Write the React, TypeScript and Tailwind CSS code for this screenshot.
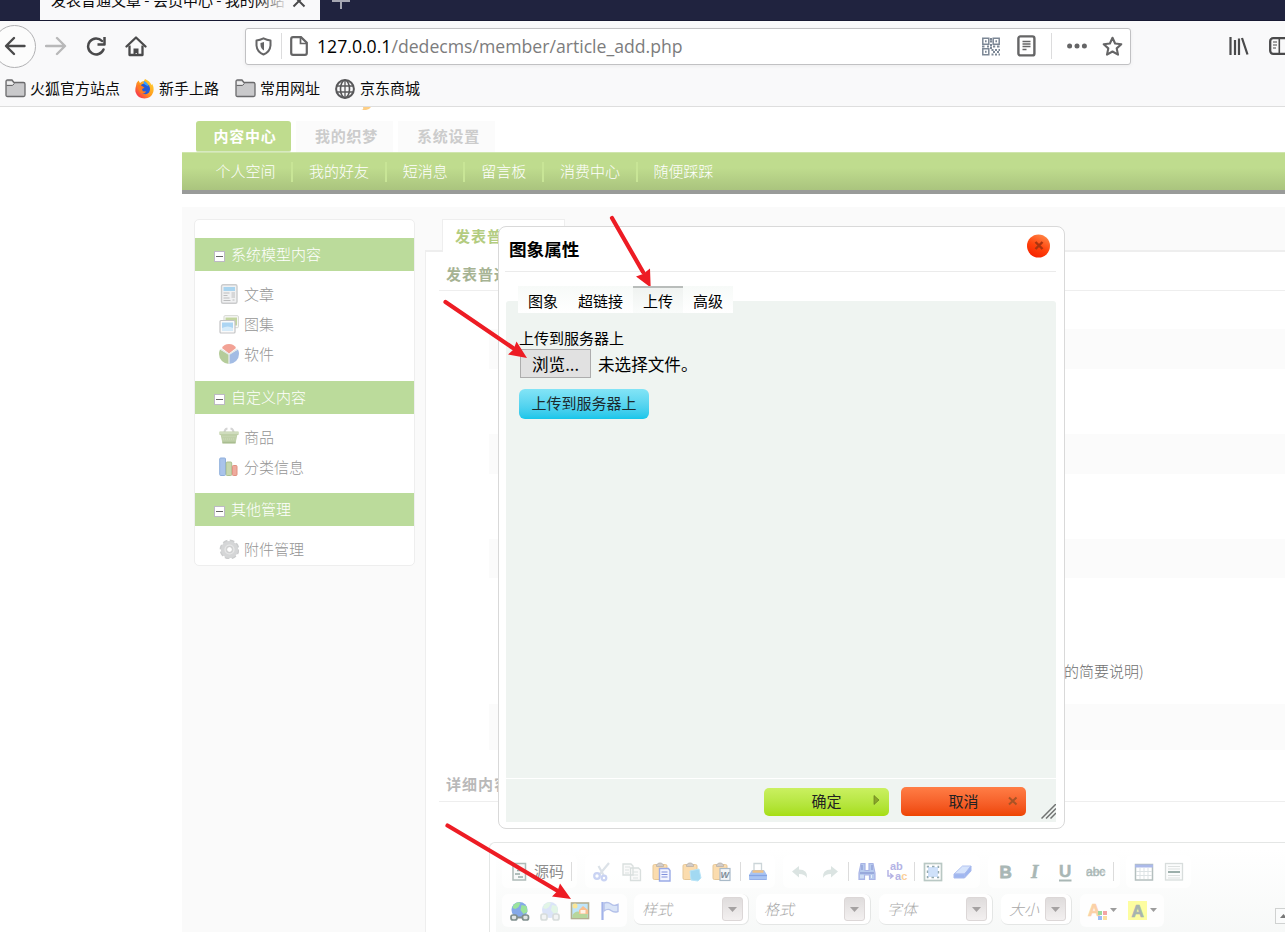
import React from "react";

const SidebarHeader = ({ title }: { title: string }) => (
  <div className="flex h-[33px] items-center bg-[#bbdb9b] pl-[19px] text-[15px] text-white">
    <span className="mt-[4px] mr-[6px] flex h-[11px] w-[11px] shrink-0 items-center justify-center border border-[#bdb9c4] bg-white">
      <span className="h-px w-[7px] bg-[#666]" />
    </span>
    <span className="-mt-[2px] leading-[15px] font-light">{title}</span>
  </div>
);

const SidebarItem = ({ title, children }: { title: string; children: React.ReactNode }) => (
  <div className="flex h-[30px] items-center gap-[5px] pl-[24px] text-[15px] leading-[15px] text-[#959595]">
    <svg width="20" height="20" viewBox="0 0 20 20">
      {children}
    </svg>
    <span className="-mt-[2px] font-light">{title}</span>
  </div>
);

const Folder = () => (
  <svg width="21" height="19" viewBox="0 0 21 19">
    <path d="M1 16V2.500Q1 1 2.500 1H7l2 2.500h9.500Q20 3.500 20 5v11q0 1.500-1.500 1.500h-16Q1 17.500 1 16z" fill="#c9c9cb" stroke="#6a6a6c" strokeWidth="1.300" />
    <path d="M1.500 6.500h6l2-2" fill="none" stroke="#6a6a6c" />
    <path d="M2 5.500V2.500h4.500l2 2-1.500 1z" fill="#eee" />
  </svg>
);

const Cell = ({ children }: { children: React.ReactNode }) => (
  <div className="flex w-[30px] shrink-0 items-center justify-center">
    <svg width="20" height="20" viewBox="0 0 20 20" className="overflow-visible">
      {children}
    </svg>
  </div>
);

const Sep = () => <div className="my-[7px] w-px shrink-0 bg-[#dcdcdc]" />;

const Group = ({ className, children }: { className: string; children: React.ReactNode }) => (
  <div className={"flex h-[33px] shrink-0 rounded-[6px] bg-white/80 " + className}>{children}</div>
);

const Select = ({ label, className }: { label: string; className: string }) => (
  <div className={"flex h-[31px] shrink-0 items-center justify-between rounded-[7px] border-r border-b border-[#e4e6e5] bg-white pr-[5px] pl-[8px] " + className}>
    <span className="-mt-px text-[15px] leading-[15px] font-light text-[#a9a9a9] italic">{label}</span>
    <span className="flex h-[24px] w-[21px] items-center justify-center rounded-[3px] border border-[#dcd7d7] bg-linear-to-b from-[#dfdcdc] to-[#f3f0f0]">
      <svg width="9" height="5" viewBox="0 0 9 5"><path d="M0 0h9L4.500 5z" fill="#a5a2a2" /></svg>
    </span>
  </div>
);

const Clip = () => (
  <>
    <rect x="1" y="2.500" width="14" height="15" rx="1.500" fill="#fbdcae" stroke="#e6c797" />
    <path d="M4.500 4.500V3l2-2h3l2 2v1.500z" fill="#d0ccca" stroke="#b5aca5" strokeWidth=".7" />
  </>
);

const NavItem = ({ children }: { children: React.ReactNode }) => (
  <div className="mr-[16px] flex h-[20px] items-center border-r-2 border-[#c8e596] pr-[15.600px] text-[15px] leading-[18px] font-light text-white last:border-0">
    <span className="-mt-[3px]">{children}</span>
  </div>
);

const Band = ({ className }: { className: string }) => <div className={"ml-[63px] bg-[#fbfbfb] " + className} />;

const BrowserChrome = () => (
  <header className="h-[107px] shrink-0 border-b border-[#dedede] bg-[#f9f9fa]">
    <div className="flex h-[21px] overflow-hidden border-b border-[#171932] bg-[#20233f]">
      <div className="ml-[40px] flex h-[22px] w-[280px] bg-[#f9f9fa] pl-[11px]">
        <div className="relative -mt-[9px] h-[22px] w-[238px] shrink-0 overflow-hidden text-[15px] leading-[18px] whitespace-nowrap text-[#0c0c0d]">
          发表普通文章 - 会员中心 - 我的网站
          <span className="absolute top-0 right-0 h-full w-[34px] bg-linear-to-r from-transparent to-[#f9f9fa]" />
        </div>
        <svg className="-mt-[6px] ml-[3px] shrink-0" width="14" height="14" viewBox="0 0 14 14"><path d="M1.500 1.500l11 11M12.500 1.500l-11 11" stroke="#4a4a4b" strokeWidth="2" /></svg>
      </div>
      <svg className="-mt-[8px] ml-[12px]" width="18" height="18" viewBox="0 0 18 18"><path d="M9 0v17M0 9h18" stroke="#a6a7b2" strokeWidth="2" /></svg>
    </div>

    <div className="flex h-[50px] items-center">
      <div className="-ml-[7px] flex h-[43px] w-[43px] shrink-0 items-center justify-center rounded-full border border-[#b1b1b3] bg-[#fcfcfc]">
        <svg width="22" height="20" viewBox="0 0 22 20"><path d="M20.500 10H2.500M10 2l-8 8 8 8" fill="none" stroke="#4a4a4b" strokeWidth="2.400" strokeLinecap="round" strokeLinejoin="round" /></svg>
      </div>
      <svg className="ml-[9px] shrink-0" width="22" height="20" viewBox="0 0 22 20"><path d="M1 10h18.500M12 2l8 8-8 8" fill="none" stroke="#b8b8b9" strokeWidth="2.400" strokeLinecap="round" strokeLinejoin="round" /></svg>
      <svg className="ml-[18px] shrink-0" width="22" height="20" viewBox="0 0 22 20">
        <path d="M18.500 13.500A8 8 0 1 1 17 5" fill="none" stroke="#4a4a4b" strokeWidth="2.500" strokeLinecap="round" />
        <path d="M19.500 1v7.500h-7" fill="none" stroke="#4a4a4b" strokeWidth="2.500" strokeLinejoin="round" />
      </svg>
      <svg className="ml-[18px] shrink-0" width="22" height="21" viewBox="0 0 22 21">
        <path d="M1.500 10.500L11 1.500l9.500 9" fill="none" stroke="#4a4a4b" strokeWidth="2.300" strokeLinecap="round" strokeLinejoin="round" />
        <path d="M4.500 9.500V19h13V9.500" fill="none" stroke="#4a4a4b" strokeWidth="2.300" strokeLinejoin="round" />
        <path d="M8.500 19v-6.500h5V19h-1.500v-2h-1.500v2z" fill="#4a4a4b" />
      </svg>

      <div className="ml-[98px] flex h-[37px] w-[886px] shrink-0 items-center rounded-[3px] border border-[#c1c1c3] bg-white shadow-[0_1px_4px_rgba(0,0,0,0.06)]">
        <svg className="ml-[9px] shrink-0" width="17" height="19" viewBox="0 0 17 19">
          <path d="M1.500 3.500Q5 3 8.500 1.300 12 3 15.500 3.500v5Q15 15 8.500 17.500 2 15 1.500 8.500z" fill="none" stroke="#656566" strokeWidth="2" strokeLinejoin="round" />
          <path d="M9 5v8.500Q5.700 11.500 5.500 8V6z" fill="#656566" />
        </svg>
        <span className="ml-[9px] h-[26px] w-px bg-[#dcdcdd]" />
        <svg className="ml-[8px] shrink-0" width="18" height="20" viewBox="0 0 18 20">
          <path d="M1.200 3q0-1.800 1.800-1.800h8l5.800 5.600V17q0 1.800-1.800 1.800H3q-1.800 0-1.800-1.800z" fill="none" stroke="#656566" strokeWidth="2.200" />
          <path d="M10.500 1.500v6h6" fill="none" stroke="#656566" strokeWidth="1.700" />
        </svg>
        <span className="ml-[9px] w-[654px] shrink-0 font-['Open_Sans','Noto_Sans',sans-serif] text-[17.650px] leading-[24px] whitespace-nowrap text-[#7c7c7d]">
          <span className="text-black">127.0.0.1</span>/dedecms/member/article_add.php
        </span>
        <svg className="ml-[11px] shrink-0" width="18" height="19" viewBox="0 0 18 19" fill="none" stroke="#7c8795" strokeWidth="1.500">
          <path d="M.8 1.300h6v6h-6zM11.200 1.300h6v6h-6zM.8 11.700h6v6h-6z" />
          <path d="M3 4.300h1.600M13.400 4.300H15M3 14.700h1.600M9 1v4M8 4.500h2.500M0 9.500h3M5 9.500h2M9 7v5M11 9.500h2.500M15 9.500h3M9.500 13h2M13 13h2M16.500 13H18M11 15h2M15 15h2M9.500 17.500h2M13 17.500h2M16.500 17.500H18" strokeDasharray="2.200 .5" strokeWidth="2" />
        </svg>
        <svg className="ml-[17px] shrink-0" width="19" height="22" viewBox="0 0 19 22">
          <rect x="1.400" y="1.400" width="16" height="19" rx="2" fill="none" stroke="#656566" strokeWidth="2.400" />
          <path d="M5.500 6.500h8M5.500 9h8M5.500 11.500h8M5.500 14.500h4" stroke="#656566" strokeWidth="1.300" />
        </svg>
        <span className="ml-[15px] h-[26px] w-px shrink-0 bg-[#dcdcdd]" />
        <svg className="ml-[15px] shrink-0" width="20" height="6" viewBox="0 0 20 6" fill="#656566"><circle cx="2.600" cy="3" r="2.500" /><circle cx="10" cy="3" r="2.500" /><circle cx="17.400" cy="3" r="2.500" /></svg>
        <svg className="ml-[15px] shrink-0" width="21" height="21" viewBox="0 0 21 21"><path d="M10.500 1.800l2.600 5.700 6.200.7-4.600 4.200 1.300 6.200-5.500-3.100L5 18.600l1.300-6.200L1.700 8.200l6.200-.7z" fill="none" stroke="#656566" strokeWidth="2.100" strokeLinejoin="round" /></svg>
      </div>

      <svg className="ml-[98px] shrink-0" width="20" height="18" viewBox="0 0 20 18"><path d="M1.500 0v18M6 3v15M10 1.500v16.500M13 1l5.500 16.500" stroke="#4a4a4b" strokeWidth="2.200" /></svg>
      <svg className="ml-[20px] shrink-0" width="22" height="18" viewBox="0 0 22 18">
        <rect x="1.200" y="1.200" width="20" height="15.600" rx="3" fill="none" stroke="#4a4a4b" strokeWidth="2.300" />
        <path d="M10.300 1v16" stroke="#4a4a4b" strokeWidth="1.600" /><path d="M4 5h4M4 8h4M4 11h3" stroke="#4a4a4b" strokeWidth="1.200" />
      </svg>
    </div>

    <div className="flex h-[35px] items-center pl-[5px] text-[15px] text-[#0c0c0d]">
      <div className="flex w-[130px] items-center gap-[4px]"><Folder />火狐官方站点</div>
      <div className="flex w-[100px] items-center gap-[5px]">
        <svg width="19" height="20" viewBox="0 0 19 20">
          <defs><linearGradient id="fox" x1="1" y1="0" x2="0" y2="1"><stop offset="0" stopColor="#ffe13a" /><stop offset=".5" stopColor="#ff9a1c" /><stop offset="1" stopColor="#f5165a" /></linearGradient></defs>
          <path d="M1 7Q1.500 3 3.500 1.500L5 4Q7 2 9 2L10 0q5 2 6.500 6l.8-1q2 4 1 8-2 6.500-8.800 6.500T.5 13Q0 10 1 7z" fill="url(#fox)" />
          <path d="M6.500 5.500q4-2.500 7.500 1 2 3.500 0 7-3 3-7 .5-2-2-2-4.500z" fill="#245bd8" />
          <path d="M9 2q-1 2.500 1.500 4l3 1.500Q13 3.500 9 2z" fill="#3aa0ff" />
          <path d="M3.500 5.500l4 1.700 2 1.500-2.500 1.300.8 2.300 3.500.2q-2 3-5.500 1.500-3.500-3-2.300-8.500z" fill="#ff7a20" />
        </svg>
        新手上路
      </div>
      <div className="flex w-[100px] items-center gap-[4px]"><Folder />常用网址</div>
      <div className="flex items-center gap-[5px]">
        <svg width="20" height="20" viewBox="0 0 20 20" fill="none" stroke="#58585a" strokeWidth="1.600"><circle cx="10" cy="10" r="8.900" strokeWidth="2" /><ellipse cx="10" cy="10" rx="4.500" ry="8.800" /><path d="M10 1v18M1.500 7h17M1.500 13h17" strokeWidth="1.300" /></svg>
        京东商城
      </div>
    </div>
  </header>
);

const Sidebar = () => (
  <aside className="mt-[12px] ml-[12px] h-[347px] w-[221px] shrink-0 overflow-hidden rounded-[5px] border border-[#eeeeee] bg-white pt-[18px]">
    <SidebarHeader title="系统模型内容" />
    <div className="pt-[8px] pb-[12px]">
      <SidebarItem title="文章">
        <rect x="2.500" y=".7" width="15.500" height="18.600" rx="1.500" fill="#f0f1f2" stroke="#cbcccd" strokeWidth="1.400" />
        <rect x="4.500" y="3" width="11.500" height="4" fill="#a9d4ef" />
        <path d="M4.500 9h6M4.500 11.500h4M4.500 14h6M4.500 16.500h7M12.500 9H16M12.500 11H16M12.500 13H16M13.500 16h2" stroke="#bcbdbe" />
      </SidebarItem>
      <SidebarItem title="图集">
        <rect x="5" y="1.700" width="14.400" height="12" rx="1" fill="#fafafa" stroke="#d3d5cf" /><rect x="6.500" y="3.500" width="11.500" height="8" fill="#c3d5a0" />
        <rect x="1" y="6.500" width="15" height="12.500" rx="1" fill="#fafafa" stroke="#c3c4c5" strokeWidth="1.200" /><rect x="3" y="8.500" width="11" height="8" fill="#acd5f3" /><path d="M3 14q6-3 11 0v2.500H3z" fill="#d7ecfa" />
      </SidebarItem>
      <SidebarItem title="软件">
        <path d="M10 10.500L1 5.500Q0 7.500 0 10A10 10 0 0 0 10 20z" fill="#b5cc9a" /><path d="M10 10.500l9-5Q20 7.500 20 10A10 10 0 0 1 10 20z" fill="#a3bce4" /><path d="M10 9.500L3 4Q5 0 10 0t7 4z" fill="#f2a295" />
        <path d="M10 20v-9.500L1.500 5M10 10.500L18.500 5" fill="none" stroke="#e3e9e6" strokeWidth="1.400" />
      </SidebarItem>
    </div>
    <SidebarHeader title="自定义内容" />
    <div className="pt-[8px] pb-[11px]">
      <SidebarItem title="商品">
        <path d="M5.500 6q0-4 3-4.500M14.500 6q0-4-3-4.500" fill="none" stroke="#d4d4d4" strokeWidth="2.200" /><path d="M.5 4.500h19v3.500h-1.200L16.500 16.500h-13L1.700 8H.5z" fill="#bfd0a8" /><path d="M.5 6h19" stroke="#cfdcbd" strokeWidth="2" /><path d="M3.500 15.500h13" stroke="#a9bd90" strokeWidth="1.600" /><path d="M3.500 9.500h13M4 12h12" stroke="#cbd9b8" strokeDasharray="1 1" />
      </SidebarItem>
      <SidebarItem title="分类信息">
        <rect x=".7" y="1" width="5.800" height="17.500" rx="1" fill="#a9c3ea" stroke="#8fafdc" /><rect x="7.200" y="5" width="5.500" height="13.500" rx="1" fill="#c6d7ad" stroke="#acc18f" /><rect x="13.400" y="8.500" width="4.600" height="10" rx="1" fill="#efaa9c" stroke="#df9180" />
      </SidebarItem>
    </div>
    <SidebarHeader title="其他管理" />
    <div className="pt-[8px]">
      <SidebarItem title="附件管理">
        <circle cx="10.500" cy="10.500" r="8.600" fill="#d2d3d4" stroke="#cbcccd" strokeWidth="2.600" strokeDasharray="4.500 2.250" /><circle cx="10.500" cy="10.500" r="8.600" fill="#d5d6d7" /><circle cx="10.500" cy="10.500" r="4.500" fill="none" stroke="#e8e8e8" strokeWidth="1.200" /><circle cx="10.500" cy="10.500" r="2.800" fill="#fff" stroke="#bbb" strokeWidth=".6" />
      </SidebarItem>
    </div>
  </aside>
);

const Editor = () => (
  <div className="ml-[63px] h-[110px] rounded-tl-[6px] border-t border-l border-[#e4e6e5] bg-white pt-[6px] pl-[6px]">
    <div className="h-[104px] bg-linear-to-b from-white to-[#f5f7f6] pt-[6px] pl-[6px]">
      <div className="flex h-[33px]">
        <Group className="w-[75px]">
          <div className="ml-[7px] flex w-[21px] items-center"><svg width="20" height="20" viewBox="0 0 20 20"><rect x="4" y="1.500" width="12.500" height="16.500" fill="#f7f9f9" stroke="#aebbb8" strokeWidth="1.500" /><path d="M6 5h5M8 8.500h6M6 12h5M9 15h5" stroke="#98aaa6" strokeWidth="1.400" /></svg></div>
          <span className="-mt-[2px] mr-[7px] ml-[4px] self-center text-[15px] leading-[15px] whitespace-nowrap text-[#8d8d8d]">源码</span>
          <Sep />
        </Group>
        <Group className="ml-[8px] w-[190px] pl-[2px]">
          <Cell><path d="M17 1L7 13M6.500 4l5 9" stroke="#dce2e8" strokeWidth="2.200" /><circle cx="5" cy="14" r="2.800" fill="none" stroke="#c9d3f3" strokeWidth="2.200" /><circle cx="12" cy="16" r="2.300" fill="none" stroke="#c9d3f3" strokeWidth="2.200" /></Cell>
          <Cell><path d="M1 2h8l2 2v9H1zM8.500 6h8l2 2v10.500h-10z" fill="#fafafa" stroke="#d9dfde" strokeWidth="1.300" /><path d="M3 5h5M3 8h4M3 11h4M11 10h5M11 13h5M11 16h5" stroke="#dce2e1" /></Cell>
          <Cell><Clip /><path d="M7.500 6.500h9l1.500 2V19H7.500z" fill="#f3f5ff" stroke="#9aabe6" strokeWidth="1.400" /><path d="M9.500 10h6M9.500 12.500h6M9.500 15h6" stroke="#8191dc" /></Cell>
          <Cell><Clip /><path d="M8 9l9-2 2 9-3 3-7-1z" fill="#a2d9f2" stroke="#b9e4f7" /></Cell>
          <Cell><Clip /><rect x="8" y="6.500" width="10" height="12" fill="#f3f6f8" stroke="#a9bac8" strokeWidth="1.200" /><text x="8.500" y="16" fontSize="9" fontWeight="bold" fontStyle="italic" fill="#7e8d99" fontFamily="Liberation Sans">W</text></Cell>
          <div className="mr-[2px] ml-[3px] flex"><Sep /></div>
          <Cell><path d="M6 9V1.500h7.500V9" fill="#fff" stroke="#ccd5d8" strokeWidth="1.300" /><path d="M4 8h12l3 5v5H1v-5z" fill="#a9c4f2" /><path d="M4.500 9.500h11" stroke="#eec287" strokeWidth="2.500" /><path d="M1 13.500h18" stroke="#86a5e4" strokeWidth="1.300" /><path d="M2 17.500h16" stroke="#94afe8" /></Cell>
        </Group>
        <Group className="ml-[8px] w-[197px] pl-[2px]">
          <Cell><path d="M9 4v3.500q9 0 8 8.500Q15 12 9 12v3.500L2 9.500z" fill="#dbe4e2" /></Cell>
          <Cell><path d="M11 4v3.500q-9 0-8 8.500Q5 12 11 12v3.500l7-6z" fill="#dbe4e2" /></Cell>
          <div className="mr-[3px] ml-[3px] flex"><Sep /></div>
          <Cell><path d="M4 1.500h4v7h4v-7h4l2 9.500v6.500h-5.500V13h-5v4.500H2V11z" fill="#b7cbee" stroke="#a9b4e6" strokeWidth="1.200" /><path d="M3 11h14M5 3v5M15 3v5" stroke="#8f9ed6" strokeWidth="1.300" /><path d="M4 13v3M6 13v3M14.500 13v3" stroke="#e6eefc" /></Cell>
          <Cell><text x="3" y="8" fontSize="11" fontWeight="bold" fill="#b4b3e5" fontFamily="Liberation Sans">ab</text><text x="8" y="17.500" fontSize="11" fontWeight="bold" fill="#b4b3e5" fontFamily="Liberation Sans">a<tspan fill="#fbd09b">c</tspan></text><path d="M1 8v6h4M3 11.500l3 2.500-3 2.500" fill="none" stroke="#b4b3e5" strokeWidth="1.500" /></Cell>
          <div className="ml-[2px] flex"><Sep /></div>
          <div className="ml-[3px] flex"><Cell><rect x="1.500" y="1.500" width="17" height="17" fill="#fff" stroke="#b9c8c4" strokeWidth="1.700" /><rect x="5" y="5" width="10" height="10" fill="#cfe1fa" /><rect x="4.500" y="4.500" width="11" height="11" fill="none" stroke="#94a9ae" strokeWidth="1.400" strokeDasharray="2.500 3" strokeDashoffset="1" /></Cell></div>
          <Cell><path d="M1 12L9.500 4H18l-6 8z" fill="#d6e4fc" stroke="#b3c4f1" /><path d="M1 12v4h10.500v-4zM11.500 16L18 9V4l-6.500 8z" fill="#9fb7f0" stroke="#aabbee" /></Cell>
        </Group>
        <Group className="ml-[8px] w-[132px] pl-[3px]">
          <Cell><text x="3.500" y="16" fontSize="17" fontWeight="bold" fill="#a9b7b5" stroke="#a9b7b5" strokeWidth=".8" fontFamily="Liberation Sans">B</text></Cell>
          <Cell><text x="5" y="16" fontSize="19" fontWeight="bold" fontStyle="italic" fill="#a9b7b5" stroke="#a9b7b5" strokeWidth=".5" fontFamily="Liberation Serif">I</text></Cell>
          <Cell><text x="3" y="15" fontSize="17" fontWeight="bold" fill="#a9b7b5" stroke="#a9b7b5" strokeWidth=".5" fontFamily="Liberation Sans">U</text><path d="M3 18.500h12.500" stroke="#a9b7b5" strokeWidth="2" /></Cell>
          <Cell><text x="0" y="14" fontSize="12" fill="#a9b7b5" stroke="#a9b7b5" strokeWidth=".4" fontFamily="Liberation Sans">abc</text><path d="M0 10h19.500" stroke="#a9b7b5" /></Cell>
          <div className="ml-[2px] flex"><Sep /></div>
        </Group>
        <Group className="ml-[6px] w-[65px] pl-[3px]">
          <Cell><rect x="1.500" y="2.500" width="17" height="15.500" fill="#fff" stroke="#b4bfbe" strokeWidth="1.500" /><path d="M1 4h18" stroke="#abb9e9" strokeWidth="3" /><path d="M2 9.500h16M2 13.500h16M6 6v11M10 6v11M14 6v11" stroke="#dde3e5" /></Cell>
          <Cell><rect x="1.500" y="1.500" width="17" height="16.500" fill="#fbfcfc" stroke="#d8dddc" strokeWidth="1.300" /><path d="M4 4.500h12M4 7h12M4 13.500h12M4 16h12" stroke="#dde1e0" /><path d="M4 10h12" stroke="#9cafab" strokeWidth="2" /></Cell>
        </Group>
      </div>
      <div className="mt-[6px] flex h-[34px]">
        <Group className="w-[125px] pl-[3px]">
          <Cell><circle cx="9.500" cy="9" r="8" fill="#84a9e8" /><path d="M3.500 4q4-4 7-2l-2 4-3 2-3-1zM11.500 4l5 1 1 6-4 2-3-4z" fill="#9be49b" /><path d="M6 16.500h7" stroke="#84908e" strokeWidth="2" /><rect x="1" y="14" width="6" height="5" rx="2" fill="#dfe5e4" stroke="#7f8f8d" strokeWidth="1.700" /><rect x="12.500" y="14" width="6" height="5" rx="2" fill="#dfe5e4" stroke="#7f8f8d" strokeWidth="1.700" /></Cell>
          <Cell><g opacity=".38"><circle cx="10" cy="9" r="8" fill="#a3bcf0" /><path d="M4 4q4-4 7-2l-2 4-3 2-3-1zM12 4l5 1 1 6-4 2-3-4z" fill="#b5e8c0" /><rect x="1" y="13" width="6" height="6" rx="2" fill="#dfe5e4" stroke="#9aa8a6" strokeWidth="1.700" /><rect x="13" y="13" width="6" height="6" rx="2" fill="#dfe5e4" stroke="#9aa8a6" strokeWidth="1.700" /></g></Cell>
          <Cell><rect x="1.500" y="2" width="17" height="15.500" fill="#bfe5fa" stroke="#b3af91" strokeWidth="1.600" /><path d="M2.500 14q3-5 8-3l7 2v4h-15z" fill="#b7d69b" /><circle cx="5" cy="5" r="2.500" fill="#fbe796" /><path d="M9 9l4-4 5 4v4H9z" fill="#f9bf8f" /><rect x="10.500" y="9" width="5" height="3.500" fill="#fff3e6" /></Cell>
          <Cell><path d="M2.500 1v18" stroke="#a2b3e9" strokeWidth="2.200" /><path d="M4 2q4-1.500 7 1t7 .5v7q-4 1.500-7-1T4 10z" fill="#d9e4f7" stroke="#b3c0e9" strokeWidth="1.400" /></Cell>
        </Group>
        <Select label="样式" className="ml-[7px] w-[115px]" />
        <Select label="格式" className="ml-[7px] w-[115px]" />
        <Select label="字体" className="ml-[8px] w-[114px]" />
        <Select label="大小" className="ml-[8px] w-[71px]" />
        <Group className="ml-[8px] w-[84px] items-center pl-[7px]">
          <svg width="74" height="22" viewBox="0 0 74 22">
            <text x="1" y="16" fontSize="17" fontWeight="bold" fill="#fbd1a7" stroke="#fbd1a7" strokeWidth=".7" fontFamily="Liberation Sans">A</text>
            <rect x="11" y="11" width="4" height="4" fill="#9dd99d" /><rect x="16" y="11" width="4" height="4" fill="#f3a5a5" /><rect x="11" y="16" width="4" height="4" fill="#9bbcf8" /><rect x="16" y="16" width="4" height="4" fill="#fbdfa0" />
            <path d="M23 8h7l-3.500 4zM63 8h7l-3.500 4z" fill="#9d9d9d" /><rect x="41" y="1" width="19" height="19" fill="#fdfda0" />
            <text x="44.500" y="17" fontSize="17" fontWeight="bold" fill="#a7b4b0" stroke="#a7b4b0" strokeWidth=".7" fontFamily="Liberation Sans">A</text>
          </svg>
        </Group>
        <div className="mt-[14px] ml-[111px] flex h-[16px] w-[16px] shrink-0 items-center justify-center border border-[#d0d2d1] bg-[#fafbfb]"><svg width="7" height="4" viewBox="0 0 7 4"><path d="M0 4h7L3.500 0z" fill="#777" /></svg></div>
      </div>
    </div>
  </div>
);

const Dialog = () => (
  <div className="absolute top-[226px] left-[498px] flex h-[603px] w-[567px] flex-col rounded-[8px] border border-[#d9d9d9] bg-white pr-[8px] pl-[7px]">
    <div className="-ml-px flex h-[45px] shrink-0 items-center justify-between border-b border-[#ebebeb] pr-[5px] pl-[4px]">
      <h2 className="text-[17.600px] leading-[20px] font-bold text-black">图象属性</h2>
      <svg className="-mt-[6px]" width="24" height="24" viewBox="0 0 24 24">
        <defs><linearGradient id="close" x1=".8" y1="0" x2=".3" y2="1"><stop offset="0" stopColor="#ff8a4a" /><stop offset=".55" stopColor="#ff430c" /><stop offset="1" stopColor="#f52200" /></linearGradient></defs>
        <circle cx="11.500" cy="12" r="11.500" fill="url(#close)" /><path d="M8.500 8l7 7M15.500 8l-7 7" stroke="#a9340f" strokeWidth="2.400" />
      </svg>
    </div>
    <div className="relative z-10 mt-[14px] -mb-[12px] ml-[12px] flex h-[27px] w-[215px] shrink-0 bg-linear-to-b from-[#f7faf8] to-white text-[15px] text-black">
      <div className="flex h-full w-[50px] items-center justify-center pt-[3px]">图象</div>
      <div className="flex h-full w-[65px] items-center justify-center pt-[3px]">超链接</div>
      <div className="flex h-full w-[50px] items-center justify-center border-t-2 border-[#b9bdbb] bg-linear-to-b from-[#f0f3f1] to-[#fafcfb] pt-px">上传</div>
      <div className="flex h-full w-[50px] items-center justify-center pt-[3px]">高级</div>
    </div>
    <div className="h-[477px] shrink-0 rounded-t-[3px] bg-[#eff4f1] pt-[27px] pl-[13px] text-[15px] text-black">
      <div className="h-[21px] leading-[20px]">上传到服务器上</div>
      <div className="ml-px flex h-[29px] items-center text-[16.600px] leading-[20px]">
        <div className="mr-[7px] flex h-[29px] w-[71px] items-center justify-center border border-[#adadad] bg-[#e1e1e1] pt-px">浏览...</div>
        <span className="pt-px">未选择文件。</span>
      </div>
      <div className="mt-[11px] flex h-[30px] w-[130px] items-center justify-center rounded-[6px] bg-linear-to-b from-[#82e4f6] to-[#14c6ea] pb-[2px] text-[#1a2a2e]">上传到服务器上</div>
    </div>
    <div className="mt-px flex h-[43px] shrink-0 items-end bg-[#eff4f1] pb-[6px] text-[15px] text-[#222]">
      <div className="relative ml-[258px] flex h-[28px] w-[125px] items-center justify-center rounded-[5px] bg-linear-to-b from-[#caf060] to-[#a6de10] pb-[2px]">
        确定
        <svg className="absolute top-[7px] right-[9px]" width="7" height="10" viewBox="0 0 7 10"><path d="M1 .5v9L6 5z" fill="#8aa52b" stroke="#67801c" strokeWidth=".7" /></svg>
      </div>
      <div className="relative ml-[12px] flex h-[29px] w-[125px] items-center justify-center rounded-[5px] bg-linear-to-b from-[#ff7d45] to-[#ee4400] pb-px">
        取消
        <svg className="absolute top-[9px] right-[8px]" width="10" height="10" viewBox="0 0 10 10"><path d="M1 1.500l7.500 7M8.500 1.500L1 8.500" stroke="#a85325" strokeWidth="2" /></svg>
      </div>
      <svg className="-mb-[3px] ml-[15px]" width="15" height="15" viewBox="0 0 15 15"><path d="M.5 14.500L15 0M5 14.500L15 4.500M9.500 14.500L15 9" stroke="#717372" strokeWidth="1.500" /></svg>
    </div>
  </div>
);

const Arrows = () => (
  <svg className="pointer-events-none absolute top-0 left-0" width="1285" height="932" viewBox="0 0 1285 932" stroke="#ed1c24" strokeWidth="4.200" strokeLinecap="round">
    <path d="M612 218L643 272M445.500 302L513 348M447.500 825.500L557 890.500" />
    <path d="M650.700 287.500L636 276.500 643 274 650 268.500zM527 358L508 354.500 513.500 349.500 516.500 341.500zM571 899L552 896.500 557.500 891 560 883.500z" fill="#ed1c24" stroke="none" />
  </svg>
);

export default function App() {
  return (
    <div className="relative flex h-[932px] w-[1285px] flex-col overflow-hidden bg-white font-['Noto_Sans_CJK_SC',sans-serif]">
      <BrowserChrome />
      <div className="flex h-[45px] shrink-0 pl-[182px] text-[15px] font-bold">
        <div className="mt-[14px] ml-[13.500px] flex h-[31px] w-[95px] items-center justify-center rounded-t-[3px] rounded-b-[2px] border-b border-[#d7e9c0] bg-[#bfdc8e] pl-[4px] tracking-[0.800px] text-white">内容中心</div>
        <div className="mt-[14px] ml-[5.500px] flex h-[31px] w-[97px] items-center justify-center bg-[#fbfbfb] pb-px pl-[4px] tracking-[0.800px] text-[#cccccc]">我的织梦</div>
        <svg className="-mr-[9px] -ml-[32px] shrink-0" width="10" height="4" viewBox="0 0 10 4"><path d="M2 0h8Q8 3 5 3H0q3 0 2-3z" fill="#fdce85" /></svg>
        <div className="mt-[14px] ml-[36px] flex h-[31px] w-[97px] items-center justify-center bg-[#fbfbfb] pb-px pl-[4px] tracking-[0.800px] text-[#cccccc]">系统设置</div>
      </div>
      <nav className="ml-[182px] flex h-[42px] shrink-0 border-t border-b-4 border-t-[#cfe5ad] border-b-[#999b99] bg-linear-to-b from-[#bfdc8e] from-40% to-[#aac47e] pt-[9px] pl-[33.500px]">
        <NavItem>个人空间</NavItem>
        <NavItem>我的好友</NavItem>
        <NavItem>短消息</NavItem>
        <NavItem>留言板</NavItem>
        <NavItem>消费中心</NavItem>
        <NavItem>随便踩踩</NavItem>
      </nav>
      <div className="mt-[13px] ml-[182px] flex h-[725px] shrink-0 bg-[#fafafa]">
        <Sidebar />
        <main className="ml-[10px] flex min-w-0 flex-1 flex-col pt-[12px]">
          <div className="relative ml-[17px] flex h-[33px] w-[123px] shrink-0 items-center border border-b-0 border-[#eeeeee] bg-white pl-[12px] text-[15px] font-bold tracking-[1px] whitespace-nowrap text-[#b3cc80]">发表普通文章</div>
          <div className="-mt-[2px] flex-1 border-t-2 border-l border-[#eeeeee] bg-white">
            <div className="ml-[13px] h-[39px] border-b border-[#eeeeee] pl-[7px] text-[15px] leading-[44px] font-bold tracking-[1px] text-[#a6b393]">发表普通文章</div>
            <Band className="mt-[38px] h-[40px]" />
            <Band className="mt-[65px] h-[40px]" />
            <Band className="mt-[65px] h-[39px]" />
            <div className="h-[126px] pt-[82px] pl-[638px] text-[15px] leading-[22px] font-light text-[#707070]">的简要说明)</div>
            <Band className="h-[46px]" />
            <div className="mb-[40px] ml-[13px] h-[52px] border-b border-[#eeeeee] pt-[23px] pl-[7px] text-[15px] leading-[22px] font-bold tracking-[1px] text-[#b9b9b9]">详细内容</div>
            <Editor />
          </div>
        </main>
      </div>
      <Dialog />
      <Arrows />
    </div>
  );
}
